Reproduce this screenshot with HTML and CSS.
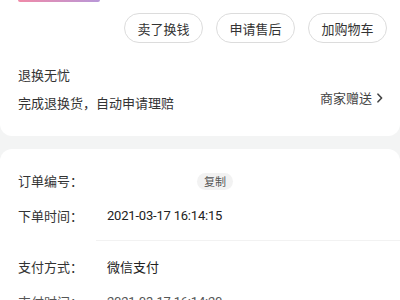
FILE: index.html
```
<!DOCTYPE html>
<html lang="zh-CN">
<head>
<meta charset="utf-8">
<link rel="stylesheet" href="styles.css">
</head>
<body>
<div class="card card-top">
  <div class="banner"></div>
  <div class="actions">
    <span class="pill">卖了换钱</span>
    <span class="pill">申请售后</span>
    <span class="pill">加购物车</span>
  </div>
  <div class="guarantee">
    <div class="g-left">
      <div class="g-title">退换无忧</div>
      <div class="g-desc">完成退换货，自动申请理赔</div>
    </div>
    <div class="g-link">商家赠送<svg class="chev" width="6" height="10" viewBox="0 0 6 10"><path d="M1 1.2 L4.6 5 L1 8.8" fill="none" stroke="#444" stroke-width="1.6" stroke-linecap="round" stroke-linejoin="round"/></svg></div>
  </div>
</div>
<div class="card card-info">
  <div class="row row-order">
    <span class="label">订单编号：</span>
    <span class="value"></span>
    <span class="copy">复制</span>
  </div>
  <div class="row row-time">
    <span class="label">下单时间：</span>
    <span class="value">2021-03-17 16:14:15</span>
  </div>
  <div class="divider"></div>
  <div class="row row-pay">
    <span class="label">支付方式：</span>
    <span class="value">微信支付</span>
  </div>
  <div class="row row-paytime">
    <span class="label">支付时间：</span>
    <span class="value">2021-03-17 16:14:20</span>
  </div>
</div>
</body>
</html>
```
FILE: styles.css
```
html, body {
  margin: 0;
  padding: 0;
}
body {
  width: 400px;
  height: 300px;
  overflow: hidden;
  background: #f3f4f4;
  font-family: "Noto Sans CJK SC", "Noto Sans", sans-serif;
  color: #333;
  font-size: 13px;
}
.card {
  background: #fff;
}
.card-top {
  border-radius: 0 0 12px 12px;
  height: 136px;
  box-sizing: border-box;
}
.banner {
  margin-left: 18px;
  width: 82px;
  height: 2px;
  background: linear-gradient(90deg, #f08aa8, #b897d8);
  border-radius: 0 0 2px 2px;
}
.actions {
  display: flex;
  justify-content: flex-end;
  gap: 13px;
  padding-right: 13px;
  margin-top: 11px;
}
.pill {
  width: 79px;
  height: 30px;
  box-sizing: border-box;
  border: 1px solid #dcdcdc;
  border-radius: 15px;
  display: flex;
  align-items: center;
  justify-content: center;
  font-size: 13px;
  color: #333;
}
.guarantee {
  display: flex;
  justify-content: space-between;
  align-items: flex-end;
  padding: 0 17px 0 18px;
  margin-top: 23px;
}
.g-title, .g-desc {
  line-height: 18px;
  height: 18px;
}
.g-desc {
  margin-top: 10px;
}
.g-link {
  color: #444;
  line-height: 18px;
  margin-bottom: 5px;
  display: flex;
  align-items: center;
}
.chev {
  margin-left: 5px;
  display: block;
}
.card-info {
  margin-top: 13px;
  border-radius: 12px 12px 0 0;
  padding-top: 23px;
  height: 200px;
}
.row {
  display: flex;
  align-items: center;
  padding-left: 18px;
  height: 18px;
  line-height: 18px;
}
.label {
  width: 89px;
  flex: none;
  color: #333;
}
.value {
  color: #222;
}
.row-order .value {
  width: 90px;
}
.copy {
  background: #f2f2f2;
  color: #555;
  font-size: 11px;
  height: 17px;
  line-height: 17px;
  padding: 0 7px;
  border-radius: 9px;
}
.row-time {
  margin-top: 17px;
}
.row-time .value, .row-paytime .value {
  font-family: Roboto, "Noto Sans CJK SC", sans-serif;
  letter-spacing: -0.2px;
}
.divider {
  margin: 15px 0 0 96px;
  height: 1px;
  background: #f2f2f2;
}
.row-pay {
  margin-top: 17px;
}
.row-paytime {
  margin-top: 17px;
}
.row-paytime .label, .row-paytime .value {
  color: #555;
}
```
